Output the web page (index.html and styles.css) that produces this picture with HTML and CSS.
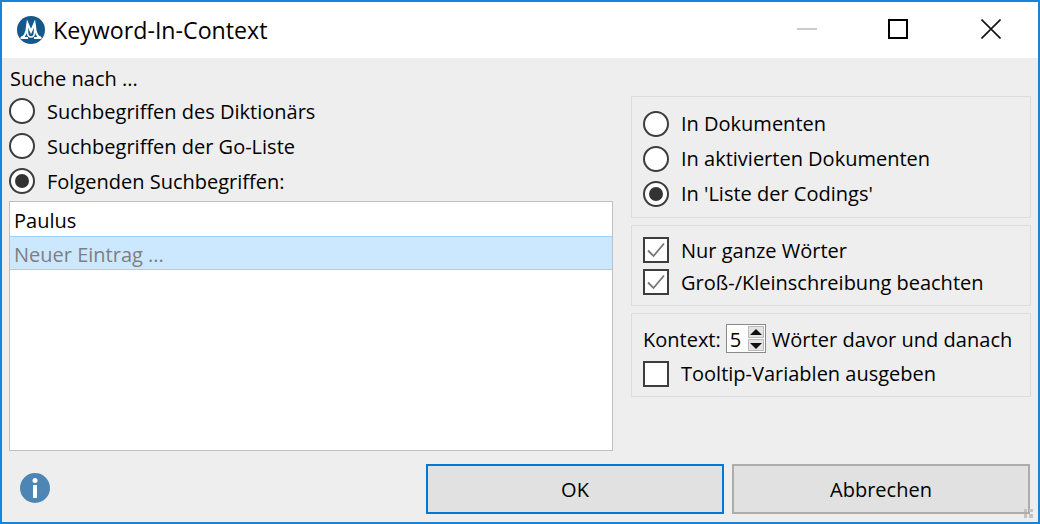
FILE: index.html
```html
<!DOCTYPE html>
<html lang="de">
<head>
<meta charset="utf-8">
<title>Keyword-In-Context</title>
<link rel="stylesheet" href="styles.css">
</head>
<body>
<div class="window">
  <header class="titlebar">
    <svg class="logo" width="28" height="28" viewBox="0 0 28 28">
      <circle cx="14" cy="14" r="14" fill="#14598c"/>
      <path d="M4 21.500c3.500 0 4.500-3 5.500-7l1-7 3.500 8 3.500-8 1 7c1 4 2 7 5.500 7" fill="none" stroke="#fff" stroke-width="2.200"/>
      <path d="M10.500 8v8c0 3.500 1.500 5 3.500 5s3.500-1.500 3.500-5V8" fill="none" stroke="#fff" stroke-width="1.500"/>
      <path d="M3.500 22h7.500M17 22h7.500" stroke="#fff" stroke-width="2.200"/>
    </svg>
    <span class="title">Keyword-In-Context</span>
    <div class="controls">
      <svg class="ctl" width="20" height="20" viewBox="0 0 20 20"><path d="M0 10h20" stroke="#ccc" stroke-width="2"/></svg>
      <svg class="ctl" width="20" height="20" viewBox="0 0 20 20"><rect x="1" y="1" width="18" height="18" fill="none" stroke="#000" stroke-width="2"/></svg>
      <svg class="ctl close" width="20" height="20" viewBox="0 0 20 20"><path d="M.5.500l19 19M19.500.500l-19 19" stroke="#111" stroke-width="1.600"/></svg>
    </div>
  </header>
  <main class="body">
    <section class="left">
      <div class="caption">Suche nach ...</div>
      <div class="row"><span class="radio"></span>Suchbegriffen des Diktionärs</div>
      <div class="row"><span class="radio"></span>Suchbegriffen der Go-Liste</div>
      <div class="row"><span class="radio on"></span>Folgenden Suchbegriffen:</div>
      <div class="list">
        <div class="item">Paulus</div>
        <div class="item new">Neuer Eintrag ...</div>
      </div>
    </section>
    <section class="right">
      <div class="group g1">
        <div class="row"><span class="radio"></span>In Dokumenten</div>
        <div class="row"><span class="radio"></span>In aktivierten Dokumenten</div>
        <div class="row"><span class="radio on"></span>In 'Liste der Codings'</div>
      </div>
      <div class="group g2">
        <div class="crow"><span class="check"><svg width="22" height="22" viewBox="0 0 22 22"><path d="M3 11.500l5.500 5.500 10.500-12.500" fill="none" stroke="#777" stroke-width="1.800"/></svg></span>Nur ganze Wörter</div>
        <div class="crow"><span class="check"><svg width="22" height="22" viewBox="0 0 22 22"><path d="M3 11.500l5.500 5.500 10.500-12.500" fill="none" stroke="#777" stroke-width="1.800"/></svg></span>Groß-/Kleinschreibung beachten</div>
      </div>
      <div class="group g3">
        <div class="kontext">
          <span>Kontext:</span>
          <span class="spin"><span class="val">5</span><span class="arrows"><span class="up"></span><span class="down"></span></span></span>
          <span class="after">Wörter davor und danach</span>
        </div>
        <div class="crow"><span class="check"></span>Tooltip-Variablen ausgeben</div>
      </div>
    </section>
  </main>
  <footer class="footer">
    <svg class="info" width="30" height="30" viewBox="0 0 30 30">
      <circle cx="15" cy="15" r="15" fill="#4d86b4"/>
      <circle cx="15" cy="7.500" r="2.500" fill="#fff"/>
      <rect x="13" y="12" width="4" height="13" fill="#fff"/>
    </svg>
    <div class="buttons">
      <button class="btn primary">OK</button>
      <button class="btn">Abbrechen</button>
    </div>
    <svg class="grip" width="9" height="9" viewBox="0 0 9 9"><path d="M0 0h3v3H0zM5 0h4v3H5zM0 5h3v4H0zM5 5h4v4H5z" fill="#c4c4c4"/></svg>
  </footer>
</div>
</body>
</html>
```
FILE: styles.css
```css
* { box-sizing: border-box; }
html, body { margin: 0; padding: 0; }
body {
  width: 1040px;
  height: 524px;
  overflow: hidden;
  font-family: "Open Sans", "Noto Sans", sans-serif;
  font-size: 20px;
  color: #000;
  background: #eee;
}
.window {
  width: 1040px;
  height: 524px;
  border: 2px solid #1883d7;
  background: #eee;
  display: flex;
  flex-direction: column;
  position: relative;
}
.titlebar {
  height: 56px;
  flex: none;
  background: #fff;
  display: flex;
  align-items: center;
  padding: 0 37px 0 15px;
}
.logo { margin-right: 8px; }
.title { font-size: 23.2px; flex: 1; line-height: 56px; }
.controls { display: flex; gap: 71px; margin-bottom: 2px; }
.ctl { display: block; }
.ctl.close { margin-left: 2px; }
.body {
  height: 399px;
  flex: none;
  display: flex;
  padding: 0 7px;
  gap: 18px;
}
.left { width: 604px; flex: none; display: flex; flex-direction: column; padding-top: 2px; }
.caption { height: 33px; line-height: 37px; padding-left: 1px; }
.row { display: flex; align-items: center; height: 35px; white-space: nowrap; }
.left .row { padding-top: 2px; }
.radio {
  width: 26px; height: 26px; flex: none;
  border: 2px solid #3d3d3d;
  border-radius: 50%;
  background: #fff;
  margin-right: 12px;
  position: relative;
}
.left .radio { margin-top: -2px; }
.radio.on::after {
  content: "";
  position: absolute;
  left: 4px; top: 4px;
  width: 14px; height: 14px;
  border-radius: 50%;
  background: #333;
}
.list {
  height: 250px;
  margin-top: 3px;
  background: #fff;
  border: 1px solid #c0c0c0;
}
.item { height: 34px; line-height: 38px; padding-left: 4px; }
.item.new {
  color: #7f7f7f;
  background: #cce8ff;
  border: solid #99d1ff;
  border-width: 1px 0;
  line-height: 36px;
}
.right { width: 400px; flex: none; display: flex; flex-direction: column; gap: 7px; padding-top: 38px; }
.group { border: 1px solid #dcdcdc; padding: 0 12px 0 11px; }
.g1 { height: 122px; padding-top: 9px; }
.g2 { height: 81px; padding-top: 8px; }
.g3 { height: 84px; padding-top: 7px; }
.crow { display: flex; align-items: center; height: 32px; white-space: nowrap; }
.g3 .crow { height: 35px; }
.check {
  width: 26px; height: 26px; flex: none;
  border: 2px solid #3d3d3d;
  background: #fff;
  margin-right: 12px;
  display: block;
}
.check svg { display: block; }
.kontext { display: flex; align-items: center; height: 35px; padding-top: 2px; white-space: nowrap; }
.after { letter-spacing: 0.04px; }
.spin {
  width: 40px; height: 29px;
  margin: -2px 6px 0 5px;
  border: 1px solid #8a8a8a;
  background: #fff;
  display: flex;
  justify-content: space-between;
  padding: 1px;
}
.val { padding-left: 2px; line-height: 27px; }
.arrows { width: 16px; display: flex; flex-direction: column; gap: 1px; }
.up, .down { flex: 1; background: #e4e4e4; border: 1px solid #bbb; position: relative; }
.up::after, .down::after {
  content: "";
  position: absolute;
  left: 1px;
  border-left: 6px solid transparent;
  border-right: 6px solid transparent;
}
.up::after { top: 2px; border-bottom: 6px solid #111; }
.down::after { top: 3px; border-top: 6px solid #111; }
.footer {
  flex: 1;
  display: flex;
  align-items: flex-start;
  justify-content: space-between;
  padding: 7px 8px 0 18px;
  position: relative;
}
.info { display: block; margin-top: 9px; }
.buttons { display: flex; gap: 8px; }
.btn {
  width: 298px;
  height: 50px;
  font: inherit;
  color: #000;
  background: #e1e1e1;
  border: 2px solid #adadad;
  padding: 0;
}
.btn.primary { border-color: #0078d7; }
.grip { position: absolute; right: 5px; bottom: 4px; }
```
